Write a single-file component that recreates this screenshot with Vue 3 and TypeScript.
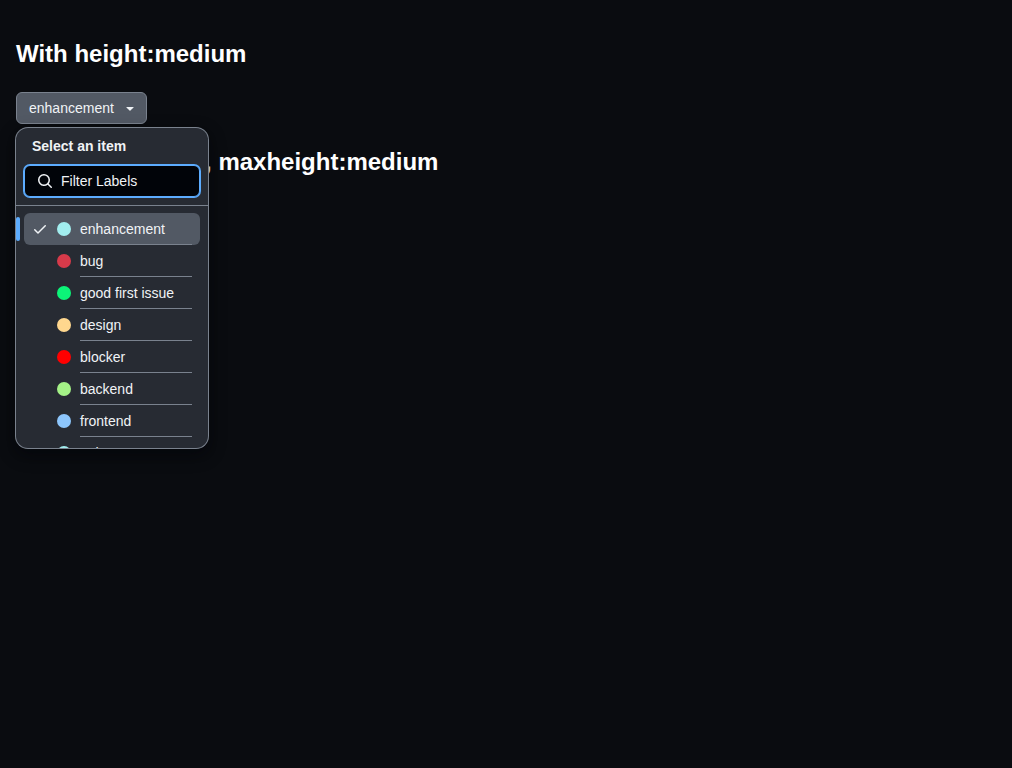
<script setup lang="ts">
import { ref } from 'vue'

interface Label {
  id: number
  name: string
  color: string
}

const labels: Label[] = [
  { id: 1, name: 'enhancement', color: '#a2eeef' },
  { id: 2, name: 'bug', color: '#d73a4a' },
  { id: 3, name: 'good first issue', color: '#0cf478' },
  { id: 4, name: 'design', color: '#ffd78e' },
  { id: 5, name: 'blocker', color: '#ff0000' },
  { id: 6, name: 'backend', color: '#a4f287' },
  { id: 7, name: 'frontend', color: '#8dc6fc' },
  { id: 8, name: 'enhancement', color: '#a2eeef' },
]
const selected = ref<Label>(labels[0])
const filter = ref('')
</script>

<template>
  <main class="page">
    <h1>With height:medium</h1>
    <div class="anchor">
      <button class="trigger" type="button">
        <span>{{ selected.name }}</span>
        <svg width="16" height="16" viewBox="0 0 16 16" fill="currentColor">
          <path d="m4.427 7.427 3.396 3.396a.25.25 0 0 0 .354 0l3.396-3.396A.25.25 0 0 0 11.396 7H4.604a.25.25 0 0 0-.177.427Z" />
        </svg>
      </button>
      <section class="overlay">
        <header class="head">
          <h2>Select an item</h2>
          <label class="search">
            <svg width="16" height="16" viewBox="0 0 16 16" fill="currentColor">
              <path d="M10.68 11.74a6 6 0 0 1-7.922-8.982 6 6 0 0 1 8.982 7.922l3.04 3.04a.749.749 0 0 1-.326 1.275.749.749 0 0 1-.734-.215ZM11.5 7a4.499 4.499 0 1 0-8.997 0A4.499 4.499 0 0 0 11.5 7Z" />
            </svg>
            <input v-model="filter" type="text" placeholder="Filter Labels" />
          </label>
        </header>
        <ul class="list">
          <li
            v-for="label in labels"
            :key="label.id"
            class="item"
            :class="{ active: label.id === selected.id }"
            @click="selected = label"
          >
            <span class="check">
              <svg v-if="label.id === selected.id" width="16" height="16" viewBox="0 0 16 16" fill="currentColor">
                <path d="M13.78 4.22a.75.75 0 0 1 0 1.06l-7.25 7.25a.75.75 0 0 1-1.06 0L2.22 9.28a.751.751 0 0 1 .018-1.042.751.751 0 0 1 1.042-.018L6 10.94l6.72-6.72a.75.75 0 0 1 1.06 0Z" />
              </svg>
            </span>
            <span class="dot" :style="{ backgroundColor: label.color }"></span>
            <span class="name">{{ label.name }}</span>
          </li>
        </ul>
      </section>
    </div>
    <h1>With height:auto, maxheight:medium</h1>
  </main>
</template>

<style>
body {
  background: #0a0c10;
}
</style>

<style scoped>
.page {
  box-sizing: border-box;
  min-height: 768px;
  padding: 36px 16px 0;
  background: #0a0c10;
  color: #ffffff;
  font: 14px/20px "Liberation Sans", Arial, sans-serif;
}
h1 {
  margin: 0;
  font-size: 24px;
  line-height: 36px;
}
.anchor {
  position: relative;
  margin: 20px 0;
  display: flex;
}
.trigger {
  box-sizing: border-box;
  display: flex;
  align-items: center;
  gap: 8px;
  height: 32px;
  padding: 0 8px 0 12px;
  border: 1px solid #7a828e;
  border-radius: 6px;
  background: #525964;
  color: #f0f3f6;
  font: inherit;
}
.overlay {
  position: absolute;
  z-index: 1;
  top: 36px;
  left: 0;
  width: 192px;
  height: 320px;
  display: flex;
  flex-direction: column;
  overflow: hidden;
  border-radius: 12px;
  background: #272b33;
  color: #f0f3f6;
  box-shadow: 0 0 0 1px #7a828e, 0 6px 12px -3px rgba(1, 4, 9, 0.4), 0 6px 18px 0 rgba(1, 4, 9, 0.4);
}
.head {
  padding: 8px 8px 8px;
  border-bottom: 1px solid #7a828e;
}
h2 {
  margin: 0 8px 9px;
  font-size: 14px;
  line-height: 20px;
}
.search {
  box-sizing: border-box;
  display: flex;
  align-items: center;
  gap: 8px;
  height: 32px;
  padding: 0 12px;
  border: 1px solid #5cacff;
  border-radius: 6px;
  background: #010409;
  box-shadow: 0 0 0 1px #5cacff;
}
.search svg {
  flex: none;
}
.search input {
  min-width: 0;
  flex: 1;
  padding: 0;
  border: 0;
  outline: 0;
  background: none;
  color: inherit;
  font: inherit;
}
.search input::placeholder {
  color: #f0f3f6;
  opacity: 1;
}
.list {
  flex: 1;
  min-height: 0;
  overflow: hidden;
  margin: 0;
  padding: 7px 8px;
  list-style: none;
}
.item {
  position: relative;
  display: grid;
  grid-template-columns: 16px 16px 1fr;
  align-items: center;
  gap: 8px;
  height: 32px;
  padding: 0 8px;
  border-radius: 6px;
}
.check {
  height: 16px;
}
.check svg {
  display: block;
}
.dot {
  justify-self: center;
  width: 14px;
  height: 14px;
  border-radius: 50%;
}
.name {
  box-sizing: border-box;
  height: 32px;
  padding-top: 6px;
  border-bottom: 1px solid #7a828e;
  white-space: nowrap;
}
.active {
  background: #525964;
}
.active::before {
  content: "";
  position: absolute;
  left: -8px;
  top: 4px;
  width: 4px;
  height: 24px;
  border-radius: 2px;
  background: #5cacff;
}
</style>
